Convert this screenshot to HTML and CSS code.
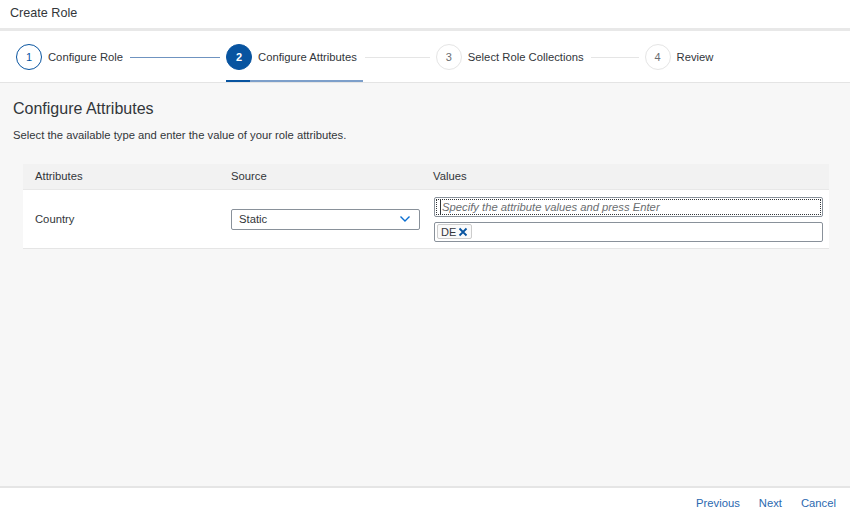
FILE: index.html
```html
<!DOCTYPE html>
<html>
<head>
<meta charset="utf-8">
<link rel="stylesheet" href="styles.css">
</head>
<body>
<div class="app">
  <header class="header">Create Role</header>
  <nav class="stepper">
    <div class="step done"><span class="circle">1</span><span class="label">Configure Role</span></div>
    <div class="connector blue c1"></div>
    <div class="step active"><span class="circle">2</span><span class="label">Configure Attributes</span></div>
    <div class="connector c2"></div>
    <div class="step"><span class="circle">3</span><span class="label">Select Role Collections</span></div>
    <div class="connector c3"></div>
    <div class="step"><span class="circle">4</span><span class="label">Review</span></div>
  </nav>
  <main class="content">
    <h1 class="title">Configure Attributes</h1>
    <p class="subtitle">Select the available type and enter the value of your role attributes.</p>
    <div class="table">
      <div class="row head">
        <div class="cell">Attributes</div>
        <div class="cell">Source</div>
        <div class="cell">Values</div>
      </div>
      <div class="row body">
        <div class="cell">Country</div>
        <div class="cell">
          <div class="select"><span>Static</span>
            <svg class="chev" width="12" height="8" viewBox="0 0 12 8"><path d="M1.5 1.5 L6 6 L10.5 1.5" fill="none" stroke="#0a6ed1" stroke-width="1.4"/></svg>
          </div>
        </div>
        <div class="cell values">
          <div class="input focus"><span class="caret"></span><span class="ph">Specify the attribute values and press Enter</span></div>
          <div class="input tokens"><span class="token">DE<svg class="x" width="10" height="10" viewBox="0 0 10 10"><path d="M1.5 1.5 L8.5 8.5 M8.5 1.5 L1.5 8.5" stroke="#0854a0" stroke-width="1.8"/></svg></span></div>
        </div>
      </div>
    </div>
  </main>
  <footer class="footer">
    <span class="btn">Previous</span>
    <span class="btn">Next</span>
    <span class="btn">Cancel</span>
  </footer>
</div>
</body>
</html>
```

FILE: styles.css
```css
* { box-sizing: border-box; }
html, body { margin: 0; padding: 0; }
body {
  font-family: "Liberation Sans", Arial, sans-serif;
  color: #32363a;
  font-size: 11.25px;
  background: #fff;
}
.app {
  width: 850px;
  height: 516px;
  display: flex;
  flex-direction: column;
}
.header {
  padding: 0 10px 3px;
  display: flex;
  align-items: center;
  font-size: 12.6px;
  border-bottom: 3px solid #e8e8e8;
  height: 31px;
}
.stepper {
  height: 52px;
  display: flex;
  align-items: stretch;
  padding-left: 16px;
  border-bottom: 1px solid #e4e4e4;
  background: #fff;
}
.step {
  display: flex;
  align-items: center;
  gap: 6px;
  padding-right: 6px;
  padding-top: 1px;
}
.step .circle {
  width: 26px;
  height: 26px;
  border-radius: 50%;
  border: 1px solid #e5e5e5;
  display: flex;
  align-items: center;
  justify-content: center;
  font-size: 11px;
  color: #6a6d70;
}
.step .label { color: #32363a; }
.step.done .circle { border-color: #0854a0; color: #0854a0; }
.step.active .circle { background: #0854a0; border-color: #0854a0; color: #fff; font-weight: bold; }
.step.active {
  background: linear-gradient(to right, #0854a0 24px, #7d9fca 24px) left bottom / 100% 2px no-repeat;
}
.connector {
  align-self: center;
  height: 1px;
  background: #e5e5e5;
  margin: 1px 6px 0 1px;
}
.connector.blue { background: #6f93c0; }
.c1 { width: 90px; }
.c2 { width: 65px; margin-left: 2px; }
.c3 { width: 48px; }
.content {
  flex: 1;
  background: #f7f7f7;
  padding: 15px 21px 0 13px;
}
.title {
  margin: 0;
  font-size: 16px;
  font-weight: normal;
  line-height: 22px;
}
.subtitle {
  margin: 7px 0 0;
  line-height: 16px;
}
.table {
  margin: 21px 0 0 10px;
}
.row {
  display: grid;
  grid-template-columns: 196px 202px 1fr;
}
.row.head {
  height: 26px;
  background: #f2f2f2;
  border-bottom: 1px solid #e8e8e8;
  align-items: center;
  padding-bottom: 1px;
}
.row.body {
  height: 59px;
  background: #fff;
  border-bottom: 1px solid #e5e5e5;
  align-items: center;
}
.cell { padding-left: 12px; }
.select {
  width: 189px;
  height: 21px;
  border: 1px solid #89919a;
  border-radius: 2px;
  display: flex;
  align-items: center;
  justify-content: space-between;
  padding: 0 8px 1px 7px;
  background: #fff;
}
.chev { margin-top: 1px; }
.values {
  display: flex;
  flex-direction: column;
  gap: 5px;
  padding-right: 6px;
  padding-left: 13px;
}
.input {
  height: 20px;
  border: 1px solid #89919a;
  border-radius: 2px;
  background: #fff;
  display: flex;
  align-items: center;
}
.input.focus {
  outline: 1px dotted #32363a;
  outline-offset: -3px;
  padding-left: 5px;
}
.caret {
  width: 1px;
  height: 14px;
  background: #32363a;
  margin-right: 1px;
}
.ph {
  font-style: italic;
  color: #6a6d70;
}
.tokens { padding-left: 2px; }
.token {
  height: 15px;
  border: 1px solid #ccc;
  border-radius: 2px;
  background: #fafafa;
  display: flex;
  align-items: center;
  padding: 0 3px 0 3px;
  gap: 2px;
  font-size: 11px;
}
.footer {
  height: 30px;
  border-top: 2px solid #e5e5e5;
  display: flex;
  align-items: center;
  justify-content: flex-end;
  gap: 19px;
  padding-right: 14px;
  padding-top: 2px;
}
.btn { color: #2b69b0; }
```
